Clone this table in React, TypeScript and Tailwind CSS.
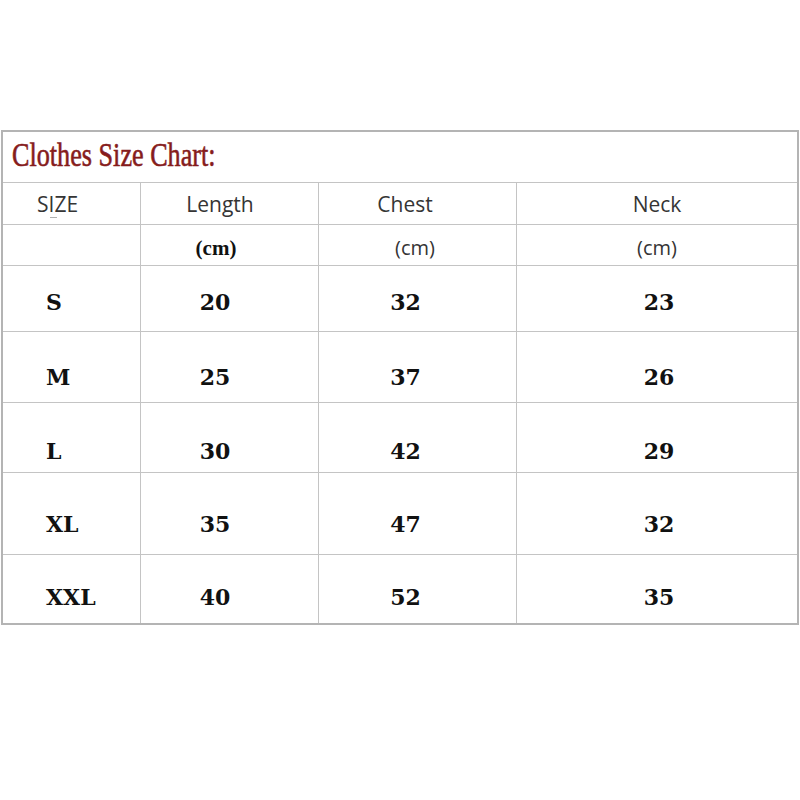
import React from "react";

const rows = [
  { size: "S", v: ["20", "32", "23"], h: "h-[66px]", pt: "pt-[24px]" },
  { size: "M", v: ["25", "37", "26"], h: "h-[71px]", pt: "pt-[33px]" },
  { size: "L", v: ["30", "42", "29"], h: "h-[70px]", pt: "pt-[36px]" },
  { size: "XL", v: ["35", "47", "32"], h: "h-[82px]", pt: "pt-[39px]" },
  { size: "XXL", v: ["40", "52", "35"], h: "h-[68px]", pt: "pt-[30px]" },
];

const sans = "font-['Open_Sans','Noto_Sans',sans-serif]";
const serifB = "font-['DejaVu_Serif','Liberation_Serif',serif] font-bold";

export default function App() {
  return (
    <div className="w-[800px] h-[800px] bg-white overflow-hidden">
      <div className="ml-[1px] mt-[130px] w-[798px] border-t-2 border-l-2 border-r-2 border-b-2 border-[#b4b4b4] flex flex-col">
        {/* title */}
        <div className="h-[51px] border-b border-[#c4c4c4] pl-[9px] pt-[6px]">
          <span className="inline-block origin-left scale-x-[0.77] whitespace-nowrap font-['Liberation_Serif',serif] text-[34px] leading-[34px] text-[#861c1c] [-webkit-text-stroke:0.6px_#861c1c]">
            Clothes Size Chart:
          </span>
        </div>
        {/* header */}
        <div className={`h-[42px] border-b border-[#c4c4c4] flex text-[21px] leading-[28px] text-[#353535] ${sans}`}>
          <div className="relative w-[138px] border-r border-[#c4c4c4] flex items-center pl-[34px]">
            SIZE
            <span className="absolute left-[47px] top-[34px] w-[7px] h-[1px] bg-[#b0b0b0]" />
          </div>
          <div className="w-[178px] border-r border-[#c4c4c4] flex items-center justify-center pr-[19px]">Length</div>
          <div className="w-[198px] border-r border-[#c4c4c4] flex items-center justify-center pr-[25px]">Chest</div>
          <div className="flex-1 flex items-center justify-center">Neck</div>
        </div>
        {/* cm row */}
        <div className="h-[41px] border-b border-[#c4c4c4] flex text-[20px] leading-[28px] text-[#353535]">
          <div className="w-[138px] border-r border-[#c4c4c4]" />
          <div className="w-[178px] border-r border-[#c4c4c4] flex items-center justify-center pr-[27px] pt-[6px] font-['Liberation_Serif',serif] font-bold text-[21px] text-[#111]">
            (cm)
          </div>
          <div className={`w-[198px] border-r border-[#c4c4c4] flex items-center justify-center pr-[5px] pt-[6px] ${sans}`}>(cm)</div>
          <div className={`flex-1 flex items-center justify-center pt-[6px] ${sans}`}>(cm)</div>
        </div>
        {rows.map((r, i) => (
          <div
            key={r.size}
            className={`${r.h} ${i < rows.length - 1 ? "border-b border-[#c4c4c4]" : ""} flex text-[22px] leading-[24px] text-[#111] ${serifB}`}
          >
            <div className={`w-[138px] border-r border-[#c4c4c4] pl-[43px] ${r.pt}`}>{r.size}</div>
            <div className={`w-[178px] border-r border-[#c4c4c4] flex justify-center pr-[29px] ${r.pt}`}>{r.v[0]}</div>
            <div className={`w-[198px] border-r border-[#c4c4c4] flex justify-center pr-[24px] ${r.pt}`}>{r.v[1]}</div>
            <div className={`flex-1 flex justify-center pl-[4px] ${r.pt}`}>{r.v[2]}</div>
          </div>
        ))}
      </div>
    </div>
  );
}
